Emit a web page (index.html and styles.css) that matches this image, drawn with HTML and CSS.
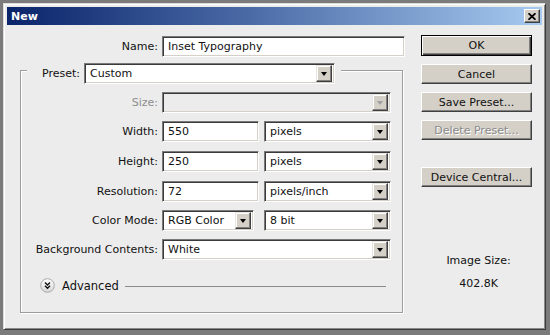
FILE: index.html
```html
<!DOCTYPE html>
<html lang="en">
<head>
  <meta charset="UTF-8">
  <title>New</title>
  <link rel="stylesheet" href="styles.css">
</head>
<body>
  <div class="window">
    <div class="titlebar">
      <span class="title">New</span>
      <span class="close">
        <svg width="8" height="7" viewBox="0 0 8 7"><path d="M0.5 0.2 L7.5 6.8 M7.5 0.2 L0.5 6.8" stroke="#000" stroke-width="1.7" fill="none"/></svg>
      </span>
    </div>

    <div class="content">
      <div class="form">
        <div class="name-row">
          <span class="label">Name:</span>
          <div class="field name">Inset Typography</div>
        </div>

        <div class="group">
          <div class="group-head">
            <span class="label">Preset:</span>
            <div class="field select preset"><span class="value">Custom</span><span class="arrow"></span></div>
          </div>

          <div class="rows">
            <div class="row">
              <span class="label disabled">Size:</span>
              <div class="field select full off"><span class="value"></span><span class="arrow"></span></div>
            </div>
            <div class="row">
              <span class="label">Width:</span>
              <div class="pair">
                <div class="field num">550</div>
                <div class="field select unit"><span class="value">pixels</span><span class="arrow"></span></div>
              </div>
            </div>
            <div class="row step">
              <span class="label">Height:</span>
              <div class="pair">
                <div class="field num">250</div>
                <div class="field select unit"><span class="value">pixels</span><span class="arrow"></span></div>
              </div>
            </div>
            <div class="row step">
              <span class="label">Resolution:</span>
              <div class="pair">
                <div class="field num">72</div>
                <div class="field select unit"><span class="value">pixels/inch</span><span class="arrow"></span></div>
              </div>
            </div>
            <div class="row">
              <span class="label">Color Mode:</span>
              <div class="pair wide-gap">
                <div class="field select mode"><span class="value">RGB Color</span><span class="arrow"></span></div>
                <div class="field select unit"><span class="value">8 bit</span><span class="arrow"></span></div>
              </div>
            </div>
            <div class="row">
              <span class="label">Background Contents:</span>
              <div class="field select full"><span class="value">White</span><span class="arrow"></span></div>
            </div>
          </div>

          <div class="advanced">
            <svg class="adv-icon" width="15" height="15" viewBox="0 0 15 15">
              <defs>
                <linearGradient id="advFill" x1="0" y1="0" x2="0" y2="1">
                  <stop offset="0" stop-color="#ffffff"/>
                  <stop offset="1" stop-color="#d6d6d6"/>
                </linearGradient>
              </defs>
              <circle cx="7.5" cy="7.5" r="6.8" fill="url(#advFill)" stroke="#a9a9a9"/>
              <path d="M5 4.6 L7.5 7 L10 4.6 M5 7.8 L7.5 10.2 L10 7.8" stroke="#111" stroke-width="1.4" fill="none"/>
            </svg>
            <span class="adv-text">Advanced</span>
            <span class="adv-line"></span>
          </div>
        </div>
      </div>

      <div class="side">
        <div class="btn default">OK</div>
        <div class="btn">Cancel</div>
        <div class="btn">Save Preset...</div>
        <div class="btn disabled">Delete Preset...</div>
        <div class="btn device">Device Central...</div>
        <div class="info">
          <div>Image Size:</div>
          <div class="size">402.8K</div>
        </div>
      </div>
    </div>
  </div>
</body>
</html>
```

FILE: styles.css
```css
body {
  margin: 0;
  background-color: #7b7b7b;
  font-family: "DejaVu Sans", sans-serif;
  font-size: 11px;
  color: #111;
}

.window {
  box-sizing: border-box;
  margin: 3px;
  width: 543px;
  height: 327px;
  padding: 3px;
  background-color: #ececec;
  border: 1px solid;
  border-color: #dcdcdc #3c3c3c #3c3c3c #dcdcdc;
  box-shadow: inset 1px 1px 0 #fff, inset -1px -1px 0 #8a8a8a;
  display: flex;
  flex-direction: column;
}

/* title bar */

.titlebar {
  height: 18px;
  display: flex;
  align-items: center;
  justify-content: space-between;
  padding: 0 2px 0 4px;
  background: linear-gradient(to right, #0a246a, #4a6aa6 45%, #a6caf0);
}

.title {
  color: #fff;
  font-weight: bold;
  font-size: 11px;
}

.close {
  box-sizing: border-box;
  width: 16px;
  height: 14px;
  display: flex;
  align-items: center;
  justify-content: center;
  background-color: #d4d0c8;
  border: 1px solid;
  border-color: #fff #404040 #404040 #fff;
  box-shadow: inset -1px -1px 0 #808080;
}

/* content */

.content {
  display: flex;
  padding: 10px 10px 0 13px;
  gap: 18px;
}

.form {
  width: 383px;
}

.label {
  white-space: nowrap;
  text-align: right;
}

.disabled {
  color: #8d8d8d;
}

.name-row {
  display: grid;
  grid-template-columns: 138px 243px;
  column-gap: 4px;
  align-items: center;
  margin-top: 1px;
}

/* sunken fields */

.field {
  box-sizing: border-box;
  height: 21px;
  display: flex;
  align-items: center;
  padding-left: 5px;
  background-color: #fff;
  border: 1px solid;
  border-color: #7a7a7a #fff #fff #7a7a7a;
  box-shadow: inset 1px 1px 0 #3a3a3a, inset -1px -1px 0 #d4d0c8;
  white-space: nowrap;
}

.select {
  padding-right: 2px;
}

.select .value {
  flex: 1;
}

.arrow {
  box-sizing: border-box;
  width: 16px;
  height: 17px;
  display: flex;
  align-items: center;
  justify-content: center;
  background-color: #d4d0c8;
  border: 1px solid;
  border-color: #e8e6e1 #404040 #404040 #e8e6e1;
  box-shadow: inset -1px -1px 0 #808080, inset 1px 1px 0 #fff;
}

.arrow::after {
  content: '';
  border-left: 3.5px solid transparent;
  border-right: 3.5px solid transparent;
  border-top: 4px solid #000;
  margin-top: 1px;
}

.off {
  background-color: #ececec;
}

.off .arrow::after {
  border-top-color: #a0a0a0;
}

.name { width: 243px; }
.preset { width: 251px; }
.full { width: 229px; }
.num { width: 97px; }
.unit { width: 127px; }
.mode { width: 92px; }

/* group box */

.group {
  box-sizing: border-box;
  height: 243px;
  margin-top: 13px;
  border: 1px solid #9c9c9c;
  box-shadow: 1px 1px 0 #fff, inset 1px 1px 0 #fff;
}

.group-head {
  display: flex;
  align-items: center;
  gap: 4px;
  width: fit-content;
  margin: -8px 0 0 6px;
  padding: 0 6px 0 15px;
  background-color: #ececec;
}

.rows {
  display: flex;
  flex-direction: column;
  gap: 8px;
  margin-top: 8px;
}

.row {
  display: grid;
  grid-template-columns: 137px auto;
  column-gap: 4px;
  align-items: center;
}

.row.step {
  margin-top: 1px;
}

.pair {
  display: flex;
  gap: 5px;
}

.pair.wide-gap {
  gap: 10px;
}

.advanced {
  display: flex;
  align-items: center;
  margin: 18px 16px 0 19px;
}

.adv-icon {
  display: block;
}

.adv-text {
  margin: 0 6px 0 7px;
  font-size: 11.5px;
}

.adv-line {
  flex: 1;
  height: 1px;
  background-color: #8a8a8a;
  margin-top: 1px;
}

/* buttons */

.side {
  width: 111px;
  display: flex;
  flex-direction: column;
  gap: 8px;
}

.btn {
  box-sizing: border-box;
  height: 20px;
  display: flex;
  align-items: center;
  justify-content: center;
  background-color: #d4d0c8;
  border: 1px solid;
  border-color: #fff #404040 #404040 #fff;
  box-shadow: inset -1px -1px 0 #808080;
}

.btn.default {
  height: 21px;
  border-color: #000;
  box-shadow: inset 1px 1px 0 #fff, inset -1px -1px 0 #404040, inset -2px -2px 0 #808080;
}

.btn.disabled {
  color: #8a8a8a;
  text-shadow: 1px 1px 0 #fff;
}

.btn.device {
  margin-top: 19px;
}

.info {
  margin-top: 59px;
  text-align: center;
  padding-left: 4px;
}

.info .size {
  margin-top: 10px;
}
```
